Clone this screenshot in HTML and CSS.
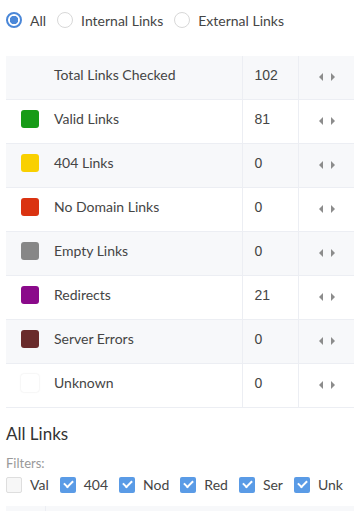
FILE: index.html
```html
<!DOCTYPE html>
<html>
  <head>
    <title>Link Checker</title>
    <link rel="stylesheet" href="styles.css">
  </head>
  <body>
    <div class="scope">
      <label class="radio-item"><span class="radio checked"></span>All</label>
      <label class="radio-item"><span class="radio"></span>Internal Links</label>
      <label class="radio-item"><span class="radio"></span>External Links</label>
    </div>

    <table class="summary">
      <tr class="grey">
        <td class="name"><span class="swatch none"></span>Total Links Checked</td>
        <td class="count">102</td>
        <td class="sort"><span class="arrow-left"></span><span class="arrow-right"></span></td>
      </tr>
      <tr>
        <td class="name"><span class="swatch valid"></span>Valid Links</td>
        <td class="count">81</td>
        <td class="sort"><span class="arrow-left"></span><span class="arrow-right"></span></td>
      </tr>
      <tr class="grey">
        <td class="name"><span class="swatch notfound"></span>404 Links</td>
        <td class="count">0</td>
        <td class="sort"><span class="arrow-left"></span><span class="arrow-right"></span></td>
      </tr>
      <tr>
        <td class="name"><span class="swatch nodomain"></span>No Domain Links</td>
        <td class="count">0</td>
        <td class="sort"><span class="arrow-left"></span><span class="arrow-right"></span></td>
      </tr>
      <tr class="grey">
        <td class="name"><span class="swatch empty"></span>Empty Links</td>
        <td class="count">0</td>
        <td class="sort"><span class="arrow-left"></span><span class="arrow-right"></span></td>
      </tr>
      <tr>
        <td class="name"><span class="swatch redirect"></span>Redirects</td>
        <td class="count">21</td>
        <td class="sort"><span class="arrow-left"></span><span class="arrow-right"></span></td>
      </tr>
      <tr class="grey">
        <td class="name"><span class="swatch server"></span>Server Errors</td>
        <td class="count">0</td>
        <td class="sort"><span class="arrow-left"></span><span class="arrow-right"></span></td>
      </tr>
      <tr>
        <td class="name"><span class="swatch unknown"></span>Unknown</td>
        <td class="count">0</td>
        <td class="sort"><span class="arrow-left"></span><span class="arrow-right"></span></td>
      </tr>
    </table>

    <h2 class="heading">All Links</h2>
    <div class="filters-label">Filters:</div>
    <div class="filters">
      <label class="check-item"><span class="check"></span>Val</label>
      <label class="check-item"><span class="check on"></span>404</label>
      <label class="check-item"><span class="check on"></span>Nod</label>
      <label class="check-item"><span class="check on"></span>Red</label>
      <label class="check-item"><span class="check on"></span>Ser</label>
      <label class="check-item"><span class="check on"></span>Unk</label>
    </div>

    <div class="links-head">
      <div class="links-first"></div>
      <div class="links-rest"></div>
    </div>
  </body>
</html>
```

FILE: styles.css
```css
body {
  margin: 0;
  padding: 0 0 0 6px;
  font-family: Lato, "Open Sans", sans-serif;
  font-size: 14px;
  color: #454545;
  overflow: hidden;
}

.scope {
  display: flex;
  align-items: center;
  height: 16px;
  margin-top: 12px;
}
.radio-item {
  display: flex;
  align-items: center;
  margin-right: 11px;
}
.radio {
  box-sizing: border-box;
  width: 16px;
  height: 16px;
  border: 1px solid #d8d8d8;
  border-radius: 50%;
  margin-right: 8px;
  background: #fff;
}
.radio.checked {
  border: 2px solid #4a87d8;
  background: radial-gradient(circle, #4a87d8 0 4px, #fff 4.5px);
}

.summary {
  border-collapse: collapse;
  margin-top: 28px;
  width: 350px;
}
.summary td {
  height: 38px;
  padding: 0 0 5px 0;
  border-bottom: 1px solid #eceef3;
}
.summary tr.grey td {
  background: #f7f8fa;
}
.name {
  width: 236px;
  padding-left: 15px !important;
  box-sizing: border-box;
}
.count {
  width: 56px;
  padding-left: 12px !important;
  box-sizing: border-box;
  border-left: 1px solid #eceef3;
  font-family: "Liberation Sans", Arial, sans-serif;
}
.sort {
  padding-left: 20px !important;
  border-left: 1px solid #eceef3;
}
.swatch {
  display: inline-block;
  width: 18px;
  height: 18px;
  border-radius: 3px;
  margin-right: 15px;
  vertical-align: -4px;
}
.none { visibility: hidden; }
.valid { background: #169b17; }
.notfound { background: #f9d000; }
.nodomain { background: #da3311; }
.empty { background: #878787; }
.redirect { background: #8a0a8a; }
.server { background: #692b2b; }
.unknown { background: #fff; box-shadow: 0 0 2px rgba(0,0,0,0.12); }

.arrow-left,
.arrow-right {
  display: inline-block;
  width: 0;
  height: 0;
  border-top: 4px solid transparent;
  border-bottom: 4px solid transparent;
  vertical-align: 0;
}
.arrow-left {
  border-right: 4px solid #8c8c8c;
  margin-right: 8px;
}
.arrow-right {
  border-left: 4px solid #8c8c8c;
}

.heading {
  margin: 15px 0 0 0;
  font-size: 17px;
  font-weight: normal;
  color: #333;
}
.filters-label {
  margin-top: 11px;
  font-size: 13px;
  color: #999;
}
.filters {
  display: flex;
  align-items: center;
  margin-top: 5px;
}
.check-item {
  display: flex;
  align-items: center;
  margin-right: 11px;
}
.check {
  box-sizing: border-box;
  width: 16px;
  height: 16px;
  border: 1px solid #dedede;
  border-radius: 2px;
  background: #f7f7f7;
  margin-right: 8px;
  position: relative;
}
.check.on {
  border: none;
  background: #5a9be6;
}
.check.on::after {
  content: "";
  position: absolute;
  left: 4px;
  top: 3px;
  width: 7px;
  height: 4px;
  border-left: 2px solid #fff;
  border-bottom: 2px solid #fff;
  transform: rotate(-45deg);
}

.links-head {
  display: flex;
  margin-top: 13px;
  height: 20px;
  background: #f7f8fa;
}
.links-first {
  width: 39px;
  border-right: 1px solid #eceef3;
}
```
